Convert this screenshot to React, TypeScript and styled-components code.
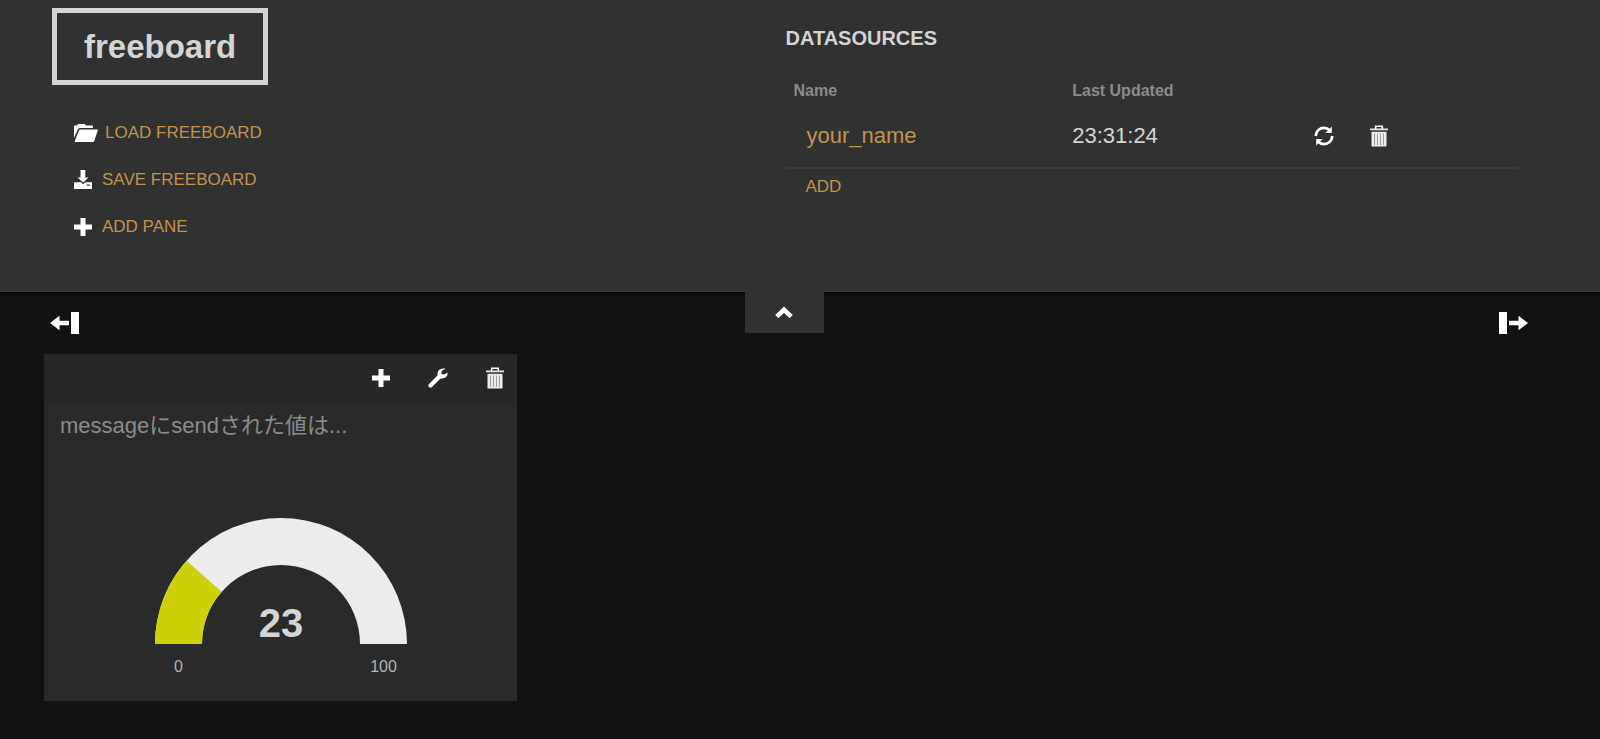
import React from 'react';
import styled, { createGlobalStyle } from 'styled-components';

const GlobalStyle = createGlobalStyle`
  *, *::before, *::after { box-sizing: border-box; }
  body {
    margin: 0;
    min-height: 100vh;
    background: #111214;
    color: #d3d4d4;
    font-family: Helvetica, "Liberation Sans", Arial, "Noto Sans CJK JP", sans-serif;
    font-size: 16px;
  }
`;

const AdminBar = styled.header`
  position: relative;
  z-index: 1;
  display: grid;
  grid-template-columns: 1fr 1fr;
  min-height: 292px;
  padding: 8px 81px 32px 52px;
  background: #313131;
  border-bottom: 1px solid #3a3a3a;
  box-shadow: 0 1px 4px #000;
`;

const Tools = styled.div`
  display: flex;
  flex-direction: column;
  align-items: flex-start;
`;

const Logo = styled.h1`
  margin: 0 0 24px;
  padding: 0 27px;
  border: 5px solid #d3d4d4;
  font-size: 33px;
  font-weight: bold;
  line-height: 67px;
`;

const Menu = styled.ul`
  margin: 0;
  padding: 0 22px;
  list-style: none;
`;

const MenuItem = styled.li`
  display: flex;
  height: 47px;
`;

const PlainButton = styled.button`
  display: inline-flex;
  align-items: center;
  justify-content: center;
  padding: 0;
  border: 0;
  background: none;
  color: #fff;
  font: inherit;
  cursor: pointer;
`;

const MenuButton = styled(PlainButton)<{ $gap: number }>`
  gap: ${(p) => p.$gap}px;
`;

const MenuLabel = styled.span`
  color: #c0934f;
  font-size: 17px;
  line-height: 24px;
  text-transform: uppercase;
`;

const Datasources = styled.section`
  padding-top: 18px;
`;

const SectionTitle = styled.h2`
  margin: 0 0 19px;
  font-size: 20px;
  font-weight: bold;
  line-height: 24px;
  text-transform: uppercase;
`;

const SourceTable = styled.table`
  width: 100%;
  border-collapse: collapse;
  table-layout: fixed;
  border-bottom: 2px solid #3c3c3c;
`;

const HeadCell = styled.th<{ $width: number }>`
  width: ${(p) => p.$width}%;
  height: 44px;
  padding: 0 8px;
  color: #8b8b8b;
  font-size: 16px;
  text-align: left;
`;

const Cell = styled.td`
  height: 55px;
  padding: 0 8px 8px;
  font-size: 22px;
`;

const SourceLink = styled.a`
  padding-left: 13px;
  color: #c0934f;
  text-decoration: none;
`;

const RowActions = styled.div`
  display: flex;
  gap: 36px;
`;

const AddButton = styled(PlainButton)`
  margin: 6px 20px;
`;

const TabRow = styled.div`
  position: absolute;
  top: 100%;
  left: 0;
  right: 0;
  display: flex;
  justify-content: center;
  padding-right: 32px;
  pointer-events: none;
`;

const ToggleTab = styled(PlainButton)`
  width: 79px;
  height: 42px;
  background: #313131;
  pointer-events: auto;
`;

const Board = styled.main`
  padding: 20px 44px 38px;
`;

const ColumnTools = styled.div`
  display: flex;
  justify-content: space-between;
  margin-bottom: 20px;
  padding: 0 28px 0 6px;
`;

const ColumnButton = styled(PlainButton)`
  gap: 2px;
`;

const ColumnBar = styled.span`
  width: 8px;
  height: 22px;
  background: #fff;
`;

const Pane = styled.section`
  width: 473px;
  max-width: 100%;
  background: #2a2a2a;
`;

const PaneHeader = styled.div`
  display: flex;
  justify-content: flex-end;
  align-items: center;
  gap: 38px;
  height: 48px;
  padding: 0 13px;
  background: #272727;
`;

const PaneTitle = styled.h3`
  margin: 0;
  padding: 7px 16px 5px;
  color: #8b8b8b;
  font-size: 22px;
  font-weight: normal;
  line-height: 34px;
`;

const GaugeBox = styled.figure`
  display: grid;
  justify-content: center;
  margin: 0;
  padding: 70px 0 24px;
`;

const GaugeSvg = styled.svg`
  display: block;
`;

const GaugeText = styled.text<{ $size: number }>`
  font-family: Arial, "Liberation Sans", sans-serif;
  font-size: ${(p) => p.$size}px;
  text-anchor: middle;
`;

const FolderIcon = () => (
  <svg width="24" height="18" viewBox="0 0 24 18" fill="#fff" aria-hidden="true">
    <path d="M0 14V2.500Q0 1.500 1 1.500H3L4 0H10.500L12 1.500H18Q19 1.500 19 2.500V4H6Q4.300 4 3.700 5.500Z" />
    <path d="M6.500 5.500H23.200Q24 5.500 23.800 6.300L20.300 16.900Q20 18 19 18H1.300Q0.500 18 .8 17L4.900 6.600Q5.300 5.500 6.500 5.500Z" />
  </svg>
);

const SaveIcon = () => (
  <svg width="18" height="19" viewBox="0 0 18 19" fill="#fff" aria-hidden="true">
    <path d="M6.500 0H11.300V7.500H14.500L9 12.500L3.500 7.500H6.500Z" />
    <path fillRule="evenodd" d="M0 12.300H6.800L9 14.200L11.200 12.300H18V19H0ZM12.800 14.500V15.700H15.800V14.500Z" />
  </svg>
);

const PlusIcon = () => (
  <svg width="18" height="18" viewBox="0 0 18 18" fill="#fff" aria-hidden="true">
    <path d="M6.500 0H11.500V6.500H18V11.500H11.500V18H6.500V11.500H0V6.500H6.500Z" />
  </svg>
);

const RefreshIcon = () => (
  <svg width="20" height="20" viewBox="0 0 20 20" aria-hidden="true">
    <g fill="none" stroke="#fff" strokeWidth="2.800">
      <path d="M1.700 10C2.200 4.700 6 1.900 10 1.900C12 1.900 13.700 2.500 15.500 4.300" />
      <path d="M18.300 10C17.800 15.300 14 18.100 10 18.100C8 18.100 6.300 17.500 4.500 15.700" />
    </g>
    <path fill="#fff" d="M17.800 .5V7H11.300ZM2.200 19.500V13H8.700Z" />
  </svg>
);

const TrashIcon = () => (
  <svg width="18" height="22" viewBox="0 0 18 22" aria-hidden="true">
    <path fill="none" stroke="#fff" strokeWidth="1.600" d="M5.700 4V1.300H12.300V4" />
    <path fill="#e4e4e4" d="M0 3.500H18V5.300H0Z" />
    <path fill="#ededed" d="M1.500 6.800H16.500V21.500H1.500Z" />
    <path stroke="#999" strokeWidth="1" d="M4.500 8.500V20M7.500 8.500V20M10.500 8.500V20M13.500 8.500V20" />
  </svg>
);

const WrenchIcon = () => (
  <svg width="20" height="20" viewBox="0 0 20 20" aria-hidden="true">
    <path stroke="#fff" strokeWidth="4.200" strokeLinecap="round" d="M2.500 17.500L11.500 8.500" />
    <path
      fill="#fff"
      d="M17.500 .8C14.500 -.2 11.500 .7 10.200 3C9.300 4.800 9.400 6.500 9.800 8L12 10.200C14 10.900 16.300 10.600 17.900 9.100C19.400 7.700 19.800 6 19.400 4.600L15.800 6.600L13.300 5.900L13.700 3Z"
    />
  </svg>
);

const ChevronUpIcon = () => (
  <svg width="18" height="13" viewBox="0 0 18 13" aria-hidden="true">
    <path fill="none" stroke="#fff" strokeWidth="4.500" d="M1.800 10.700L9 3.700L16.200 10.700" />
  </svg>
);

const ArrowLeftIcon = () => (
  <svg width="19" height="16" viewBox="0 0 19 16" fill="#fff" aria-hidden="true">
    <path d="M0 8L9.500 .8V5.800H19V10.200H9.500V15.200Z" />
  </svg>
);

const ArrowRightIcon = () => (
  <svg width="19" height="16" viewBox="0 0 19 16" fill="#fff" aria-hidden="true">
    <path d="M19 8L9.500 .8V5.800H0V10.200H9.500V15.200Z" />
  </svg>
);

const OUTER = 126;
const INNER = 79;

/** Ring slice between two shares (0 to 1) of the half circle, left to right. */
const ringSlice = (from: number, to: number) => {
  const at = (share: number, r: number) => {
    const angle = Math.PI * (1 - share);
    return `${OUTER + r * Math.cos(angle)} ${OUTER - r * Math.sin(angle)}`;
  };
  return `M${at(from, OUTER)}A${OUTER} ${OUTER} 0 0 1 ${at(to, OUTER)}L${at(to, INNER)}A${INNER} ${INNER} 0 0 0 ${at(from, INNER)}Z`;
};

const Gauge = ({ value, min, max }: { value: number; min: number; max: number }) => {
  const share = (value - min) / (max - min);
  const middle = (OUTER - INNER) / 2;
  return (
    <GaugeBox>
      <GaugeSvg width="252" height="159" viewBox="0 0 252 159" role="img" aria-label={`${value}`}>
        <path d={ringSlice(0, 1)} fill="#edebeb" />
        <path d={ringSlice(0, share)} fill="#cdd109" />
        <GaugeText x={OUTER} y="119" $size={40} fontWeight="bold" fill="#d3d4d4">{value}</GaugeText>
        <GaugeText x={middle} y="154" $size={16} fill="#b3b3b3">{min}</GaugeText>
        <GaugeText x={OUTER * 2 - middle} y="154" $size={16} fill="#b3b3b3">{max}</GaugeText>
      </GaugeSvg>
    </GaugeBox>
  );
};

export default function App() {
  return (
    <>
      <GlobalStyle />
      <AdminBar>
        <Tools>
          <Logo>freeboard</Logo>
          <Menu>
            <MenuItem>
              <MenuButton $gap={7}><FolderIcon /><MenuLabel>Load Freeboard</MenuLabel></MenuButton>
            </MenuItem>
            <MenuItem>
              <MenuButton $gap={10}><SaveIcon /><MenuLabel>Save Freeboard</MenuLabel></MenuButton>
            </MenuItem>
            <MenuItem>
              <MenuButton $gap={10}><PlusIcon /><MenuLabel>Add Pane</MenuLabel></MenuButton>
            </MenuItem>
          </Menu>
        </Tools>
        <Datasources>
          <SectionTitle>Datasources</SectionTitle>
          <SourceTable>
            <thead>
              <tr>
                <HeadCell $width={38}>Name</HeadCell>
                <HeadCell $width={33}>Last Updated</HeadCell>
                <HeadCell $width={29} aria-label="Actions" />
              </tr>
            </thead>
            <tbody>
              <tr>
                <Cell><SourceLink href="#your_name">your_name</SourceLink></Cell>
                <Cell>23:31:24</Cell>
                <Cell>
                  <RowActions>
                    <PlainButton aria-label="Refresh"><RefreshIcon /></PlainButton>
                    <PlainButton aria-label="Delete datasource"><TrashIcon /></PlainButton>
                  </RowActions>
                </Cell>
              </tr>
            </tbody>
          </SourceTable>
          <AddButton><MenuLabel>Add</MenuLabel></AddButton>
        </Datasources>
        <TabRow>
          <ToggleTab aria-label="Collapse header"><ChevronUpIcon /></ToggleTab>
        </TabRow>
      </AdminBar>
      <Board>
        <ColumnTools>
          <ColumnButton aria-label="Add column on the left"><ArrowLeftIcon /><ColumnBar /></ColumnButton>
          <ColumnButton aria-label="Add column on the right"><ColumnBar /><ArrowRightIcon /></ColumnButton>
        </ColumnTools>
        <Pane>
          <PaneHeader>
            <PlainButton aria-label="Add widget"><PlusIcon /></PlainButton>
            <PlainButton aria-label="Edit pane"><WrenchIcon /></PlainButton>
            <PlainButton aria-label="Delete pane"><TrashIcon /></PlainButton>
          </PaneHeader>
          <PaneTitle>messageにsendされた値は...</PaneTitle>
          <Gauge value={23} min={0} max={100} />
        </Pane>
      </Board>
    </>
  );
}
